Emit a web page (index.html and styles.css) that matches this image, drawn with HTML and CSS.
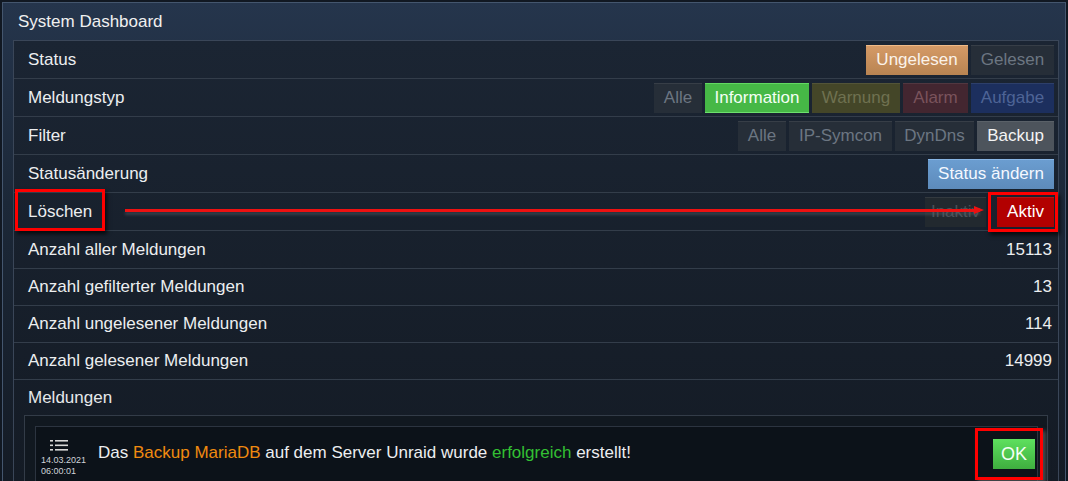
FILE: index.html
```html
<!DOCTYPE html>
<html>
<head>
<meta charset="utf-8">
<link rel="stylesheet" href="styles.css">
</head>
<body>
<div class="panel">
  <div class="title">System Dashboard</div>
  <div class="table">
    <div class="row">
      <span class="label">Status</span>
      <div class="btns">
        <span class="btn orange">Ungelesen</span>
        <span class="btn dim">Gelesen</span>
      </div>
    </div>
    <div class="row">
      <span class="label">Meldungstyp</span>
      <div class="btns">
        <span class="btn dim w-alle">Alle</span>
        <span class="btn green">Information</span>
        <span class="btn olive">Warnung</span>
        <span class="btn wine">Alarm</span>
        <span class="btn navy">Aufgabe</span>
      </div>
    </div>
    <div class="row">
      <span class="label">Filter</span>
      <div class="btns">
        <span class="btn dim w-alle">Alle</span>
        <span class="btn dim w-ip">IP-Symcon</span>
        <span class="btn dim w-dyn">DynDns</span>
        <span class="btn grey">Backup</span>
      </div>
    </div>
    <div class="row">
      <span class="label">Statusänderung</span>
      <div class="btns">
        <span class="btn blue">Status ändern</span>
      </div>
    </div>
    <div class="row loeschen">
      <span class="label">Löschen</span>
      <div class="btns gap-wide">
        <span class="btn dim inaktiv">Inaktiv</span>
        <span class="btn red">Aktiv</span>
      </div>
      <span class="mark mark-label"></span>
      <span class="arrow"></span>
      <span class="arrowhead"></span>
      <span class="mark mark-aktiv"></span>
    </div>
    <div class="row"><span class="label">Anzahl aller Meldungen</span><span class="value">15113</span></div>
    <div class="row short"><span class="label">Anzahl gefilterter Meldungen</span><span class="value">13</span></div>
    <div class="row short"><span class="label">Anzahl ungelesener Meldungen</span><span class="value">114</span></div>
    <div class="row short"><span class="label">Anzahl gelesener Meldungen</span><span class="value">14999</span></div>
    <div class="msgsection">
      <div class="msghead">Meldungen</div>
      <div class="msgbox">
        <div class="msg">
          <div class="meta">
            <svg class="listicon" width="19" height="11" viewBox="0 0 19 11">
              <rect x="0" y="0" width="3" height="1.6" fill="#d8d8d8"/>
              <rect x="5" y="0" width="13" height="1.6" fill="#d8d8d8"/>
              <rect x="0" y="4.5" width="3" height="1.6" fill="#d8d8d8"/>
              <rect x="5" y="4.5" width="13" height="1.6" fill="#d8d8d8"/>
              <rect x="0" y="9" width="3" height="1.6" fill="#d8d8d8"/>
              <rect x="5" y="9" width="13" height="1.6" fill="#d8d8d8"/>
            </svg>
            <span class="date">14.03.2021</span>
            <span class="date">06:00:01</span>
          </div>
          <div class="text">Das <span class="hl-orange">Backup MariaDB</span> auf dem Server Unraid wurde <span class="hl-green">erfolgreich</span> erstellt!</div>
          <span class="btn okbtn">OK</span>
          <span class="mark mark-ok"></span>
        </div>
      </div>
    </div>
  </div>
</div>
</body>
</html>
```

FILE: styles.css
```css
* { box-sizing: border-box; }
html, body {
  margin: 0;
  padding: 0;
  background: #111822;
  font-family: "Liberation Sans", Arial, sans-serif;
  color: #e6e8ea;
  overflow: hidden;
}
body { padding: 2px 2px 0 2px; height: 481px; }
.panel {
  border: 1px solid #44566e;
  border-bottom: none;
  height: 479px;
  background: linear-gradient(#25354c 0px, #1c2838 200px, #141b25 479px);
  overflow: hidden;
}
.title {
  height: 37px;
  padding-left: 15px;
  display: flex;
  align-items: center;
  font-size: 17px;
  color: #f0f0f0;
}
.table {
  margin-left: 10px;
  margin-right: 6px;
  border: 1px solid #3a4658;
  border-bottom: none;
  background: linear-gradient(#1b2533, #141b25 440px);
}
.row {
  position: relative;
  height: 38px;
  border-bottom: 1px solid #333d4a;
  display: flex;
  align-items: center;
  justify-content: space-between;
  padding-left: 14px;
  padding-right: 4px;
  font-size: 17px;
}
.row.short { height: 37px; }
.label { color: #eceef0; }
.value { padding-right: 2px; color: #eceef0; }
.btns { display: flex; gap: 3px; align-items: center; }
.btns.gap-wide { gap: 11px; }
.btn {
  height: 30px;
  display: flex;
  align-items: center;
  justify-content: center;
  padding: 0;
  font-size: 17px;
  white-space: nowrap;
  border-top: 1px solid rgba(255,255,255,0.08);
}
.w-alle { width: 48px; }
.w-ip { width: 103px; }
.w-dyn { width: 79px; }
.dim { background: #262e38; color: #6c7682; }
.orange { background: linear-gradient(#d59a66, #b88452); color: #fbf3ea; border-top: 1px solid #f0bb88; width: 102px; }
.btns .dim:last-child { width: 83px; }
.green { background: #46b846; color: #f4fff4; border-top: 1px solid #62d862; border-bottom: 1px solid #6ee06e; width: 104px; }
.olive { background: #444628; color: #6f7150; width: 88px; }
.wine { background: #432630; color: #7a535c; width: 65px; }
.navy { background: #1c2f5e; color: #4e6496; width: 83px; }
.grey { background: #4d545c; color: #f4f4f4; width: 77px; }
.blue { background: linear-gradient(#6b9dd0, #5d8bbb); color: #f4f8ff; border-top: 1px solid #88b6e6; width: 126px; }
.red { background: #b20000; color: #fff; width: 57px; }
.inaktiv { width: 61px; background: #22292f; color: #4b5158; }

.mark {
  position: absolute;
  border: 3px solid #f00;
  box-shadow: 2px 3px 4px rgba(0,0,0,0.7);
}
.mark-label { left: 1px; top: -4px; width: 90px; height: 42px; }
.mark-aktiv { right: 0px; top: -1px; width: 70px; height: 40px; }
.arrow {
  position: absolute;
  left: 111px;
  top: 16px;
  width: 855px;
  height: 3px;
  background: #ee1111;
  box-shadow: 0 3px 3px rgba(90,100,110,0.5);
}
.arrowhead {
  position: absolute;
  left: 960px;
  top: 13px;
  width: 0; height: 0;
  border-top: 4px solid transparent;
  border-bottom: 4px solid transparent;
  border-left: 10px solid #ee1111;
}

.msgsection { padding-left: 10px; padding-right: 10px; }
.msghead {
  height: 35px;
  display: flex;
  align-items: center;
  padding-left: 4px;
  font-size: 17px;
}
.msgbox {
  border: 1px solid #333c48;
  border-bottom: none;
  background: #111820;
  padding: 10px 9px 0 10px;
  height: 80px;
}
.msg {
  position: relative;
  border: 1px solid #2c3440;
  background: #0c1219;
  height: 56px;
  display: flex;
  align-items: center;
  padding-left: 5px;
  padding-right: 2px;
}
.meta {
  width: 56px;
  display: flex;
  flex-direction: column;
  align-items: flex-start;
  padding-top: 8px;
}
.listicon { margin-bottom: 4px; margin-left: 9px; }
.date { font-size: 9px; line-height: 11px; color: #d0d4d8; }
.text { flex: 1; padding-left: 1px; font-size: 17px; color: #eceef0; padding-bottom: 2px; }
.hl-orange { color: #f08a10; }
.hl-green { color: #33c033; }
.okbtn {
  width: 42px;
  height: 30px;
  background: linear-gradient(#5ee05e, #3fae3f);
  color: #f6fff6;
  font-size: 18px;
  border: none;
}
.mark-ok { right: -6px; top: 1px; width: 68px; height: 52px; box-shadow: 3px 3px 4px rgba(110,110,110,0.6); }
```
